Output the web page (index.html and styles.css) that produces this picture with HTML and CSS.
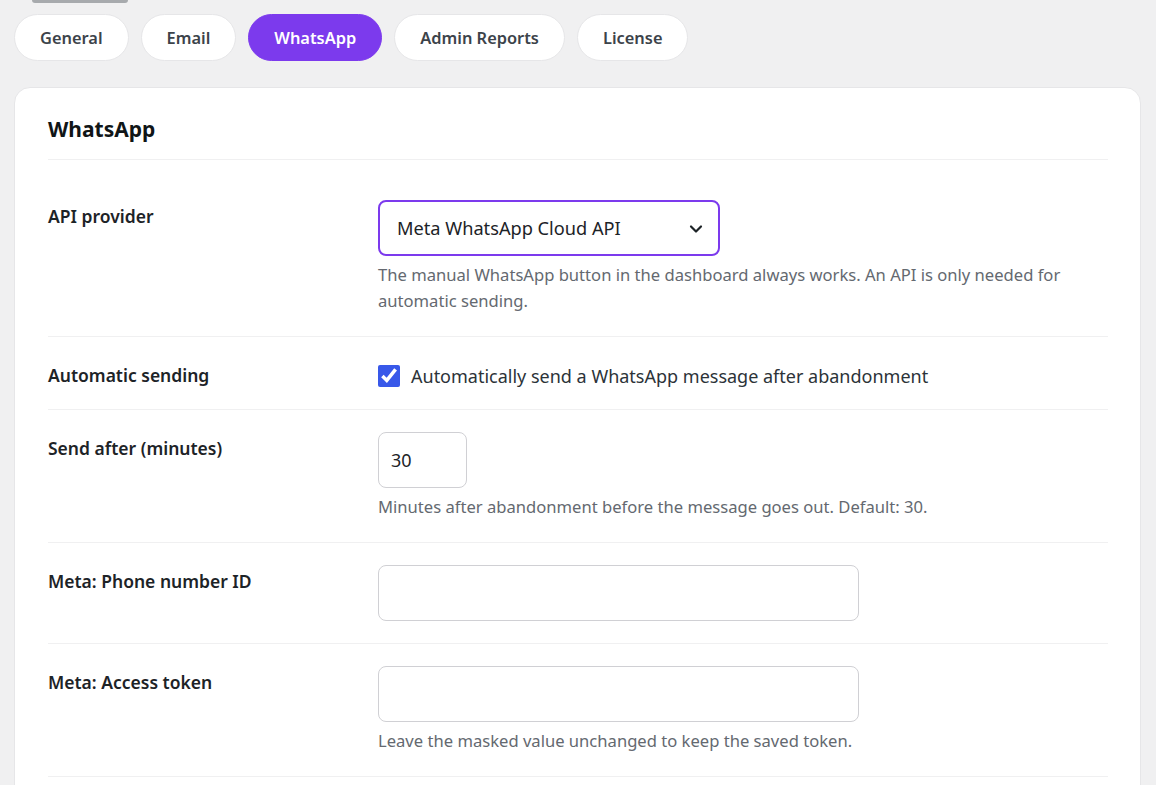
FILE: index.html
```html
<!DOCTYPE html>
<html lang="en">
<head>
    <meta charset="UTF-8">
    <meta name="viewport" content="width=device-width, initial-scale=1.0">
    <title>Settings - WhatsApp</title>
    <link rel="stylesheet" href="styles.css">
</head>
<body>
    <div class="wrap">
        <div class="top-stub"></div>

        <nav class="tabs">
            <a href="#" class="tab">General</a>
            <a href="#" class="tab">Email</a>
            <a href="#" class="tab active">WhatsApp</a>
            <a href="#" class="tab">Admin Reports</a>
            <a href="#" class="tab">License</a>
        </nav>

        <div class="card">
            <h2 class="card-title">WhatsApp</h2>

            <div class="form">
                <div class="row">
                    <label class="row-label" for="provider">API provider</label>
                    <div class="row-field">
                        <div class="select-wrap">
                            <select id="provider" class="select">
                                <option>Meta WhatsApp Cloud API</option>
                            </select>
                            <svg class="chevron" width="16" height="16" viewBox="0 0 16 16" fill="none">
                                <path d="M3 5.5l5 5 5-5" stroke="#1d2327" stroke-width="2.2" stroke-linecap="round" stroke-linejoin="round"/>
                            </svg>
                        </div>
                        <p class="help">The manual WhatsApp button in the dashboard always works. An API is only needed for automatic sending.</p>
                    </div>
                </div>

                <div class="row">
                    <div class="row-label">Automatic sending</div>
                    <div class="row-field">
                        <label class="check">
                            <input type="checkbox" checked>
                            <span>Automatically send a WhatsApp message after abandonment</span>
                        </label>
                    </div>
                </div>

                <div class="row">
                    <label class="row-label" for="delay">Send after (minutes)</label>
                    <div class="row-field">
                        <input id="delay" class="input input-small" type="text" value="30">
                        <p class="help">Minutes after abandonment before the message goes out. Default: 30.</p>
                    </div>
                </div>

                <div class="row">
                    <label class="row-label" for="phone">Meta: Phone number ID</label>
                    <div class="row-field">
                        <input id="phone" class="input" type="text">
                    </div>
                </div>

                <div class="row">
                    <label class="row-label" for="token">Meta: Access token</label>
                    <div class="row-field">
                        <input id="token" class="input" type="text">
                        <p class="help">Leave the masked value unchanged to keep the saved token.</p>
                    </div>
                </div>
            </div>
        </div>
    </div>
</body>
</html>
```

FILE: styles.css
```css
* {
    margin: 0;
    padding: 0;
    box-sizing: border-box;
}

body {
    font-family: 'Noto Sans', sans-serif;
    background-color: #f0f0f1;
    color: #1d2327;
}

.wrap {
    padding: 0 15px 0 14px;
}

.top-stub {
    width: 96px;
    height: 3px;
    margin-left: 18px;
    background-color: #a7aaad;
    border-radius: 0 0 3px 3px;
}

.tabs {
    display: flex;
    gap: 12px;
    margin-top: 11px;
}

.tab {
    display: inline-flex;
    align-items: center;
    height: 47px;
    padding: 0 25px;
    background-color: #ffffff;
    border: 1px solid #e6e6e8;
    border-radius: 24px;
    font-size: 16.4px;
    font-weight: 600;
    color: #3c434a;
    text-decoration: none;
}

.tab.active {
    background-color: #7c3aed;
    border-color: #7c3aed;
    color: #ffffff;
}

.card {
    margin-top: 26px;
    background-color: #ffffff;
    border: 1px solid #e6e6e8;
    border-radius: 16px;
    padding: 0 32px 40px 33px;
}

.card-title {
    font-size: 21px;
    font-weight: 700;
    line-height: 28px;
    padding: 27px 0 16px;
    border-bottom: 1px solid #f0f0f1;
    color: #101517;
}

.form {
    margin-top: 18px;
}

.row {
    display: grid;
    grid-template-columns: 330px 1fr;
    padding: 22px 0;
    border-bottom: 1px solid #f0f0f1;
}

.row-label {
    font-size: 17.5px;
    font-weight: 600;
    line-height: 24px;
    padding-top: 4px;
    color: #1d2327;
}

.select-wrap {
    position: relative;
    width: 342px;
}

.select {
    appearance: none;
    width: 100%;
    height: 56px;
    padding: 0 48px 0 17px;
    border: 2px solid #7c3aed;
    border-radius: 8px;
    background-color: #ffffff;
    font-family: 'Noto Sans', sans-serif;
    font-size: 18.2px;
    color: #1d2327;
}

.chevron {
    position: absolute;
    right: 16px;
    top: 21px;
}

.help {
    margin-top: 6px;
    font-size: 16.6px;
    line-height: 26px;
    color: #646970;
}

.check {
    display: flex;
    align-items: center;
    gap: 11px;
    height: 28px;
    margin-top: 3px;
    margin-bottom: -3px;
    font-size: 18px;
    color: #2c3338;
}

.check input {
    width: 22px;
    height: 22px;
    margin: 0;
    accent-color: #3858e9;
}

.input {
    display: block;
    width: 481px;
    height: 56px;
    padding: 0 12px;
    border: 1px solid #d0d0d4;
    border-radius: 8px;
    font-family: 'Noto Sans', sans-serif;
    font-size: 18px;
    color: #1d2327;
}

.input-small {
    width: 89px;
}
```
